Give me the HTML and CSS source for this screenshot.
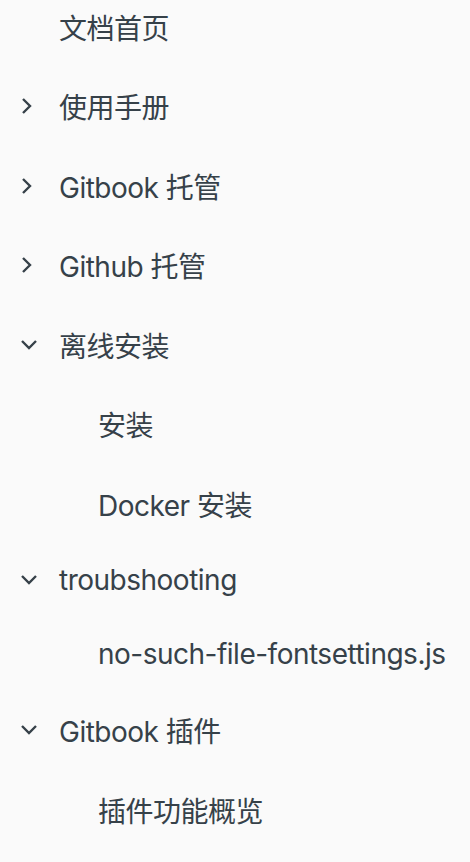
FILE: index.html
```html
<!doctype html>
<html lang="zh-CN">
<head>
    <meta charset="UTF-8">
    <title>Summary</title>

    <link rel="stylesheet" href="styles.css">
</head>
<body>

<nav class="book-summary">
    <ul class="summary">
        <li class="chapter">
            <a class="chapter__link" href="#"><span class="chapter__arrow"></span>文档首页</a>
        </li>
        <li class="chapter">
            <a class="chapter__link" href="#">
                <span class="chapter__arrow">
                    <svg width="12" height="18" viewBox="0 0 12 18"><path d="M3 2 L10 9 L3 16" fill="none" stroke="#364149" stroke-width="2.4"/></svg>
                </span>使用手册</a>
        </li>
        <li class="chapter">
            <a class="chapter__link" href="#">
                <span class="chapter__arrow">
                    <svg width="12" height="18" viewBox="0 0 12 18"><path d="M3 2 L10 9 L3 16" fill="none" stroke="#364149" stroke-width="2.4"/></svg>
                </span>Gitbook 托管</a>
        </li>
        <li class="chapter">
            <a class="chapter__link" href="#">
                <span class="chapter__arrow">
                    <svg width="12" height="18" viewBox="0 0 12 18"><path d="M3 2 L10 9 L3 16" fill="none" stroke="#364149" stroke-width="2.4"/></svg>
                </span>Github 托管</a>
        </li>
        <li class="chapter">
            <a class="chapter__link" href="#">
                <span class="chapter__arrow">
                    <svg width="18" height="12" viewBox="0 0 18 12"><path d="M2 2 L9 9 L16 2" fill="none" stroke="#364149" stroke-width="2.4"/></svg>
                </span>离线安装</a>
            <ul class="articles">
                <li class="chapter"><a class="chapter__link" href="#">安装</a></li>
                <li class="chapter"><a class="chapter__link" href="#">Docker 安装</a></li>
            </ul>
        </li>
        <li class="chapter">
            <a class="chapter__link" href="#">
                <span class="chapter__arrow">
                    <svg width="18" height="12" viewBox="0 0 18 12"><path d="M2 2 L9 9 L16 2" fill="none" stroke="#364149" stroke-width="2.4"/></svg>
                </span>troubshooting</a>
            <ul class="articles">
                <li class="chapter"><a class="chapter__link" href="#">no-such-file-fontsettings.js</a></li>
            </ul>
        </li>
        <li class="chapter">
            <a class="chapter__link" href="#">
                <span class="chapter__arrow">
                    <svg width="18" height="12" viewBox="0 0 18 12"><path d="M2 2 L9 9 L16 2" fill="none" stroke="#364149" stroke-width="2.4"/></svg>
                </span>Gitbook 插件</a>
            <ul class="articles">
                <li class="chapter"><a class="chapter__link" href="#">插件功能概览</a></li>
            </ul>
        </li>
    </ul>
</nav>

</body>
</html>
```

FILE: styles.css
```css
* {
    margin: 0;
    padding: 0;
    box-sizing: border-box;
}

body {
    background-color: #fafafa;
    color: #364149;
    font-family: Inter, "Noto Sans CJK SC", sans-serif;
    font-size: 28px;
    letter-spacing: -0.5px;
}

.book-summary {
    margin-top: -13px;
}

.summary,
.articles {
    list-style: none;
}

.chapter__link {
    display: flex;
    align-items: center;
    padding: 19.75px 0 19.75px 20px;
    color: #364149;
    text-decoration: none;
}

.chapter__arrow {
    display: flex;
    align-items: center;
    width: 39px;
    flex-shrink: 0;
}

.articles .chapter__link {
    padding-left: 98px;
}
```
